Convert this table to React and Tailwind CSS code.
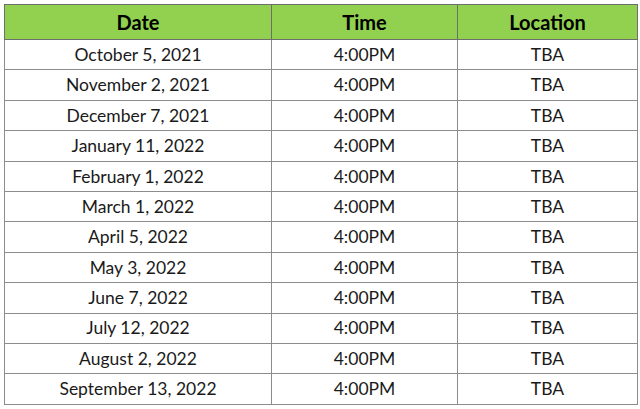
const rows = [
  "October 5, 2021",
  "November 2, 2021",
  "December 7, 2021",
  "January 11, 2022",
  "February 1, 2022",
  "March 1, 2022",
  "April 5, 2022",
  "May 3, 2022",
  "June 7, 2022",
  "July 12, 2022",
  "August 2, 2022",
  "September 13, 2022",
];

export default function App() {
  return (
    <div className="w-[640px] h-[409px] bg-white pt-[4px] pl-[4px]" style={{ fontFamily: "Lato, 'Liberation Sans', sans-serif" }}>
      <table className="border-collapse table-fixed w-[633px] text-[17.5px] text-[#1a1a1a]">
        <colgroup>
          <col className="w-[267px]" />
          <col className="w-[186px]" />
          <col className="w-[180px]" />
        </colgroup>
        <thead>
          <tr className="h-[35px] bg-[#92d050]">
            <th className="border border-[#6e6e6e] font-bold text-[20px] text-black p-0">Date</th>
            <th className="border border-[#6e6e6e] font-bold text-[20px] text-black p-0">Time</th>
            <th className="border border-[#6e6e6e] font-bold text-[20px] text-black p-0">Location</th>
          </tr>
        </thead>
        <tbody>
          {rows.map((d, i) => (
            <tr key={d} className="h-[30.4px]">
              <td className="border border-[#8c8c8c] text-center p-0 leading-none">{d}</td>
              <td className="border border-[#8c8c8c] text-center p-0 leading-none">4:00PM</td>
              <td className="border border-[#8c8c8c] text-center p-0 leading-none">TBA</td>
            </tr>
          ))}
        </tbody>
      </table>
    </div>
  );
}
